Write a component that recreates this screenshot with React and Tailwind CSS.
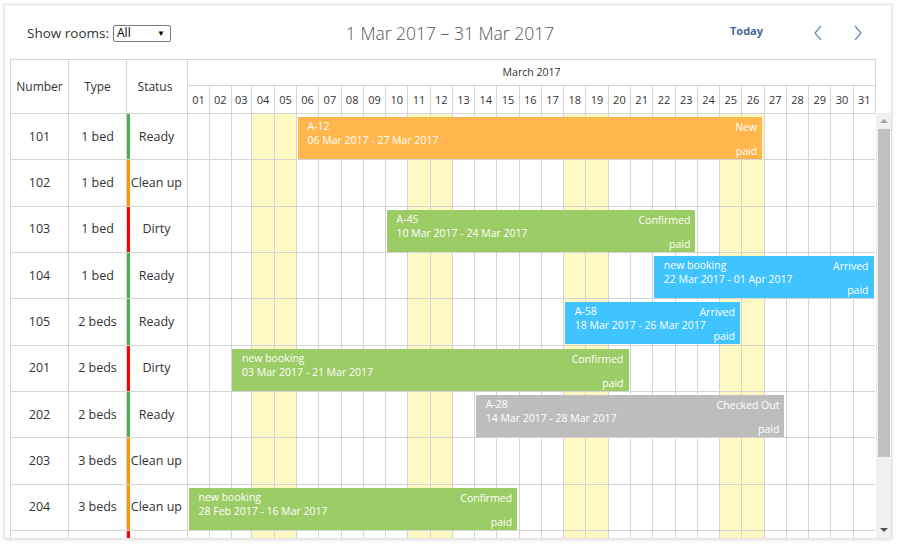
import React from "react";

const WEEKEND = new Set([3, 4, 10, 11, 17, 18, 24, 25]);
const GREEN = "#4caf50";
const ORANGE = "#ff9800";
const RED = "#ff0000";

// x position (absolute, px) of the grid line before day column k
const L = (k) => (k === 0 ? 187 : k === 1 ? 209 : k === 2 ? 230.5 : k === 3 ? 251 : k === 4 ? 274 : 296 + (k - 5) * 22.27);

const rows = [
  { n: "101", t: "1 bed", s: "Ready", c: GREEN, b: { name: "A-12", dates: "06 Mar 2017 - 27 Mar 2017", status: "New", color: "#ffb74d", start: 5, end: 26 } },
  { n: "102", t: "1 bed", s: "Clean up", c: ORANGE },
  { n: "103", t: "1 bed", s: "Dirty", c: RED, b: { name: "A-45", dates: "10 Mar 2017 - 24 Mar 2017", status: "Confirmed", color: "#9ccc65", start: 9, end: 23 } },
  { n: "104", t: "1 bed", s: "Ready", c: GREEN, b: { name: "new booking", dates: "22 Mar 2017 - 01 Apr 2017", status: "Arrived", color: "#40c4ff", start: 21, end: 31 } },
  { n: "105", t: "2 beds", s: "Ready", c: GREEN, b: { name: "A-58", dates: "18 Mar 2017 - 26 Mar 2017", status: "Arrived", color: "#40c4ff", start: 17, end: 25 } },
  { n: "201", t: "2 beds", s: "Dirty", c: RED, b: { name: "new booking", dates: "03 Mar 2017 - 21 Mar 2017", status: "Confirmed", color: "#9ccc65", start: 2, end: 20 } },
  { n: "202", t: "2 beds", s: "Ready", c: GREEN, b: { name: "A-28", dates: "14 Mar 2017 - 28 Mar 2017", status: "Checked Out", color: "#bdbdbd", start: 13, end: 27 } },
  { n: "203", t: "3 beds", s: "Clean up", c: ORANGE },
  { n: "204", t: "3 beds", s: "Clean up", c: ORANGE, b: { name: "new booking", dates: "28 Feb 2017 - 16 Mar 2017", status: "Confirmed", color: "#9ccc65", start: 0, end: 15 } },
  { n: "", t: "", s: "", c: RED },
];

const days = Array.from({ length: 31 }, (_, i) => String(i + 1).padStart(2, "0"));
const COLS = "grid-cols-[22px_21.5px_20.5px_23px_22px_repeat(26,minmax(0,1fr))]";

function Bar({ b }) {
  const left = L(b.start) + 1.5 - 188;
  const right = L(b.end) - 1.5 - 188;
  return (
    <div
      className="absolute top-[3px] h-[42px] text-white overflow-hidden text-[10.5px] leading-[14px]"
      style={{ left, width: right - left, background: b.color }}
    >
      <div className="pl-[10px] pt-[2px] whitespace-nowrap">
        <div>{b.name}</div>
        <div>{b.dates}</div>
      </div>
      <div className="absolute right-[5px] top-[3px] whitespace-nowrap">{b.status}</div>
      <div className="absolute right-[5px] bottom-[1px] whitespace-nowrap">paid</div>
    </div>
  );
}

function Chevron({ dir }) {
  return (
    <svg width="12" height="18" viewBox="0 0 12 18" fill="none" stroke="#6f8fbd" strokeWidth="1.3">
      {dir === "left" ? <path d="M9 2 L3 9 L9 16" /> : <path d="M3 2 L9 9 L3 16" />}
    </svg>
  );
}

export default function App() {
  return (
    <div className="w-[900px] h-[544px] bg-white pt-[4px] pl-[4px] text-[#333]" style={{ fontFamily: '"Open Sans", "Noto Sans", sans-serif' }}>
      <div className="w-[888px] h-[535px] border border-[#e2e2e2] shadow-[0_1px_4px_rgba(0,0,0,0.12)] bg-white flex flex-col overflow-hidden">
        {/* Toolbar */}
        <div className="h-[54px] shrink-0 grid grid-cols-[1fr_auto_1fr] items-center pl-[22px] pr-[27px]">
          <div className="flex items-center gap-[4px] pt-[2px]">
            <span className="text-[13.5px] text-[#333]">Show rooms:</span>
            <div className="w-[58px] h-[17px] border border-[#7a7a7a] rounded-[2px] flex items-center justify-between pl-[3px] pr-[5px] text-[12px] text-black leading-none">
              <span>All</span>
              <span className="text-[8px]">▼</span>
            </div>
          </div>
          <div className="text-[17.5px] font-light text-[#555] pt-[2px] pl-[9px]">1 Mar 2017 – 31 Mar 2017</div>
          <div className="flex items-center justify-end">
            <span className="text-[11px] font-bold text-[#44679a] mr-[49px] pb-[1px]">Today</span>
            <div className="mr-[28px] pt-[2px]"><Chevron dir="left" /></div>
            <div className="pt-[2px]"><Chevron dir="right" /></div>
          </div>
        </div>

        {/* Header */}
        <div className="ml-[5px] w-[866px] h-[54px] shrink-0 flex border-t border-l border-[#d4d4d4] text-[12px]">
          <div className="w-[58px] shrink-0 border-r border-[#d4d4d4] flex items-center justify-center pt-[1px]">Number</div>
          <div className="w-[58px] shrink-0 border-r border-[#d4d4d4] flex items-center justify-center pt-[1px]">Type</div>
          <div className="w-[61px] shrink-0 border-r border-[#d4d4d4] flex items-center justify-center pt-[1px] pr-[4px]">Status</div>
          <div className="w-[688px] shrink-0 flex flex-col">
            <div className="h-[26px] border-b border-r border-[#d4d4d4] flex items-center justify-center text-[10.5px] pt-[1px]">March 2017</div>
            <div className={`flex-1 grid ${COLS}`}>
              {days.map((d) => (
                <div key={d} className="flex items-center justify-center text-[11px] border-r border-[#d4d4d4] pt-[1px]">{d}</div>
              ))}
            </div>
          </div>
        </div>

        {/* Body */}
        <div className="flex-1 flex min-h-0">
          <div className="ml-[5px] w-[865px] overflow-hidden border-l border-t border-[#d4d4d4]">
            {rows.map((r, idx) => (
              <div key={idx} className="h-[46.33px] flex border-b border-[#d4d4d4] text-[12.5px]">
                <div className="w-[58px] shrink-0 border-r border-[#d4d4d4] flex items-center justify-center pt-[1px]">{r.n}</div>
                <div className="w-[58px] shrink-0 border-r border-[#d4d4d4] flex items-center justify-center pt-[1px]">{r.t}</div>
                <div className="w-[61px] shrink-0 border-r border-[#d4d4d4] flex">
                  <div className="w-[3px] h-full" style={{ background: r.c }} />
                  <div className="flex-1 flex items-center justify-center pl-[1px] pr-[5px] pt-[1px] whitespace-nowrap">{r.s}</div>
                </div>
                <div className={`w-[688px] shrink-0 relative grid ${COLS}`}>
                  {days.map((d, i) => (
                    <div key={d} className={`border-r border-[#d4d4d4] ${WEEKEND.has(i) ? "bg-[#fff9c4]" : ""}`} />
                  ))}
                  {r.b && <Bar b={r.b} />}
                </div>
              </div>
            ))}
          </div>
          <div className="ml-auto w-[15px] bg-[#f1f1f1] flex flex-col items-center">
            <div className="h-[16px] flex items-center justify-center">
              <div className="w-0 h-0 border-l-[4px] border-r-[4px] border-b-[4px] border-l-transparent border-r-transparent border-b-[#a3a3a3]" />
            </div>
            <div className="w-[12px] h-[328px] bg-[#c1c1c1]" />
            <div className="flex-1" />
            <div className="h-[16px] flex items-center justify-center">
              <div className="w-0 h-0 border-l-[4px] border-r-[4px] border-t-[4px] border-l-transparent border-r-transparent border-t-[#505050]" />
            </div>
          </div>
        </div>
      </div>
    </div>
  );
}
